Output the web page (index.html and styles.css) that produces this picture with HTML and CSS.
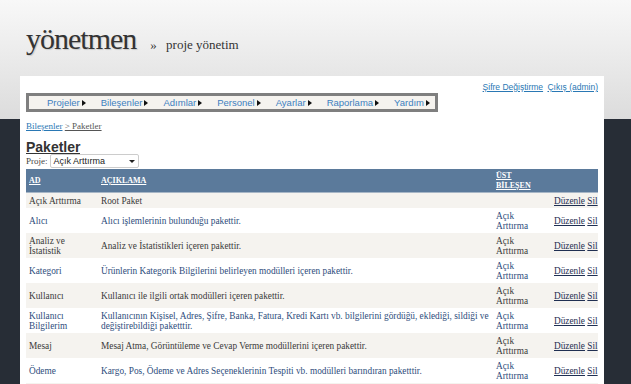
FILE: index.html
```html
<!DOCTYPE html>
<html lang="tr">

<head>
  <meta charset="UTF-8">
  <meta name="viewport" content="width=device-width, initial-scale=1.0">
  <title>yönetmen - Paketler</title>
  <link rel="stylesheet" href="styles.css">
</head>

<body>
  <div class="site-header">
    <span class="site-title">yönetmen</span>
    <span class="site-sub"><span class="raquo">»</span> proje yönetim</span>
  </div>

  <div class="page">
    <div class="user-links">
      <a href="#">Şifre Değiştirme</a>
      <a href="#">Çıkış (admin)</a>
    </div>

    <ul class="main-menu">
      <li><a href="#">Projeler</a><span class="arrow"></span></li>
      <li><a href="#">Bileşenler</a><span class="arrow"></span></li>
      <li><a href="#">Adımlar</a><span class="arrow"></span></li>
      <li><a href="#">Personel</a><span class="arrow"></span></li>
      <li><a href="#">Ayarlar</a><span class="arrow"></span></li>
      <li><a href="#">Raporlama</a><span class="arrow"></span></li>
      <li><a href="#">Yardım</a><span class="arrow"></span></li>
    </ul>

    <div class="breadcrumb">
      <a href="#">Bileşenler</a> <span class="crumb-current">&gt; Paketler</span>
    </div>

    <h1 class="page-title">Paketler</h1>

    <div class="filter-row">
      <label>Proje:</label>
      <div class="select-box">
        <span>Açık Arttırma</span>
        <span class="select-arrow"></span>
      </div>
    </div>

    <table class="list-table">
      <thead>
        <tr>
          <th class="col-name"><a href="#">Ad</a></th>
          <th class="col-desc"><a href="#">Açıklama</a></th>
          <th class="col-parent"><a href="#">Üst Bileşen</a></th>
          <th class="col-actions"></th>
        </tr>
      </thead>
      <tbody>
        <tr>
          <td>Açık Arttırma</td>
          <td>Root Paket</td>
          <td></td>
          <td class="actions"><a href="#">Düzenle</a> <a href="#">Sil</a></td>
        </tr>
        <tr>
          <td>Alıcı</td>
          <td>Alıcı işlemlerinin bulunduğu pakettir.</td>
          <td>Açık Arttırma</td>
          <td class="actions"><a href="#">Düzenle</a> <a href="#">Sil</a></td>
        </tr>
        <tr>
          <td>Analiz ve İstatistik</td>
          <td>Analiz ve İstatistikleri içeren pakettir.</td>
          <td>Açık Arttırma</td>
          <td class="actions"><a href="#">Düzenle</a> <a href="#">Sil</a></td>
        </tr>
        <tr>
          <td>Kategori</td>
          <td>Ürünlerin Kategorik Bilgilerini belirleyen modülleri içeren pakettir.</td>
          <td>Açık Arttırma</td>
          <td class="actions"><a href="#">Düzenle</a> <a href="#">Sil</a></td>
        </tr>
        <tr>
          <td>Kullanıcı</td>
          <td>Kullanıcı ile ilgili ortak modülleri içeren pakettir.</td>
          <td>Açık Arttırma</td>
          <td class="actions"><a href="#">Düzenle</a> <a href="#">Sil</a></td>
        </tr>
        <tr>
          <td>Kullanıcı Bilgilerim</td>
          <td>Kullanıcının Kişisel, Adres, Şifre, Banka, Fatura, Kredi Kartı vb. bilgilerini gördüğü, eklediği, sildiği ve değiştirebildiği paketttir.</td>
          <td>Açık Arttırma</td>
          <td class="actions"><a href="#">Düzenle</a> <a href="#">Sil</a></td>
        </tr>
        <tr>
          <td>Mesaj</td>
          <td>Mesaj Atma, Görüntüleme ve Cevap Verme modüllerini içeren pakettir.</td>
          <td>Açık Arttırma</td>
          <td class="actions"><a href="#">Düzenle</a> <a href="#">Sil</a></td>
        </tr>
        <tr>
          <td>Ödeme</td>
          <td>Kargo, Pos, Ödeme ve Adres Seçeneklerinin Tespiti vb. modülleri barındıran paketttir.</td>
          <td>Açık Arttırma</td>
          <td class="actions"><a href="#">Düzenle</a> <a href="#">Sil</a></td>
        </tr>
        <tr class="filler-row">
          <td colspan="4"></td>
        </tr>
      </tbody>
    </table>
  </div>
</body>

</html>
```

FILE: styles.css
```css
body {
  margin: 0;
  height: 100vh;
  overflow: hidden;
  background: linear-gradient(180deg, #f8f8f8 0%, #dcdcdc 100%) no-repeat top left / 100% 119px, #272d36;
  font-family: "Liberation Serif", serif;
  color: #333;
}

a {
  color: inherit;
}

.site-header {
  height: 76px;
  box-sizing: border-box;
  padding: 22px 0 0 26px;
  display: flex;
  align-items: baseline;
}

.site-title {
  font-family: "Liberation Serif", serif;
  font-size: 30px;
  letter-spacing: -1px;
  color: #333;
  text-shadow: 1px 1px 1px rgba(0, 0, 0, 0.15);
}

.site-sub {
  margin-left: 14px;
  font-size: 13px;
  color: #333;
}

.raquo {
  margin-right: 6px;
}

.page {
  width: 584px;
  margin-left: 20px;
  min-height: 308px;
  box-sizing: border-box;
  background: #fff;
  padding: 6px 6px 0 6px;
}

.user-links {
  text-align: right;
  font-family: "Liberation Sans", sans-serif;
  font-size: 8.5px;
  line-height: 10px;
  height: 10px;
}

.user-links a {
  color: #2a78b4;
  margin-left: 2px;
}

.main-menu {
  display: inline-flex;
  align-items: center;
  list-style: none;
  margin: 0;
  padding: 0 5px 0 18px;
  height: 13px;
  border: 3px solid #7f7f7f;
  background: #f5f3ef;
  font-family: "Liberation Sans", sans-serif;
  font-size: 9.5px;
  gap: 15px;
}

.main-menu li {
  display: flex;
  align-items: center;
}

.main-menu a {
  color: #3d7fbf;
  text-decoration: none;
}

.arrow {
  width: 0;
  height: 0;
  margin-left: 2px;
  border-top: 3px solid transparent;
  border-bottom: 3px solid transparent;
  border-left: 4px solid #111;
}

.breadcrumb {
  margin-top: 8px;
  font-size: 9px;
  line-height: 12px;
}

.breadcrumb a {
  color: #2a78b4;
}

.crumb-current {
  color: #555;
  text-decoration: underline;
}

.page-title {
  display: inline-block;
  margin: 9px 0 0;
  font-family: "Liberation Sans", sans-serif;
  font-size: 14px;
  line-height: 12px;
  font-weight: bold;
  color: #333;
  border-bottom: 1px solid #333;
}

.filter-row {
  display: flex;
  align-items: center;
  gap: 2px;
  margin-top: -2px;
  font-size: 9px;
  color: #444;
}

.select-box {
  display: flex;
  align-items: center;
  justify-content: space-between;
  width: 89px;
  height: 14px;
  box-sizing: border-box;
  padding: 0 3px;
  border: 1px solid #ccc;
  border-radius: 2px;
  background: #fff;
  font-family: "Liberation Sans", sans-serif;
  font-size: 9px;
  color: #222;
}

.select-arrow {
  width: 0;
  height: 0;
  border-left: 3px solid transparent;
  border-right: 3px solid transparent;
  border-top: 3px solid #222;
}

.list-table {
  width: 572px;
  table-layout: fixed;
  margin-top: 1px;
  border-collapse: collapse;
  font-size: 9.3px;
  line-height: 10px;
}

.list-table th {
  background: #5b7a9b;
  color: #fff;
  text-align: left;
  text-transform: uppercase;
  font-size: 8px;
  line-height: 10px;
  height: 22px;
  padding: 1px 3px 0;
  border-bottom: 1px solid #a7b6c6;
}

.list-table th.col-name {
  width: 66px;
}

.list-table th.col-desc {
  width: 389px;
}

.list-table th.col-parent {
  width: 49px;
  padding-right: 6px;
}

.list-table td {
  padding: 3px 3px 2px;
  vertical-align: middle;
}

.list-table td:nth-child(2) {
  padding-right: 0;
}

.list-table td:nth-child(3) {
  padding-right: 6px;
}

.list-table tbody tr:nth-child(odd) {
  background: #f5f3ef;
  color: #3a3a3a;
}

.list-table tbody tr:nth-child(even) {
  background: #fff;
  color: #2e4d7c;
}

.list-table tr.filler-row td {
  height: 20px;
}

.list-table td.actions {
  text-align: right;
  padding-right: 2px;
  white-space: nowrap;
  color: #1f2f52;
}
```
